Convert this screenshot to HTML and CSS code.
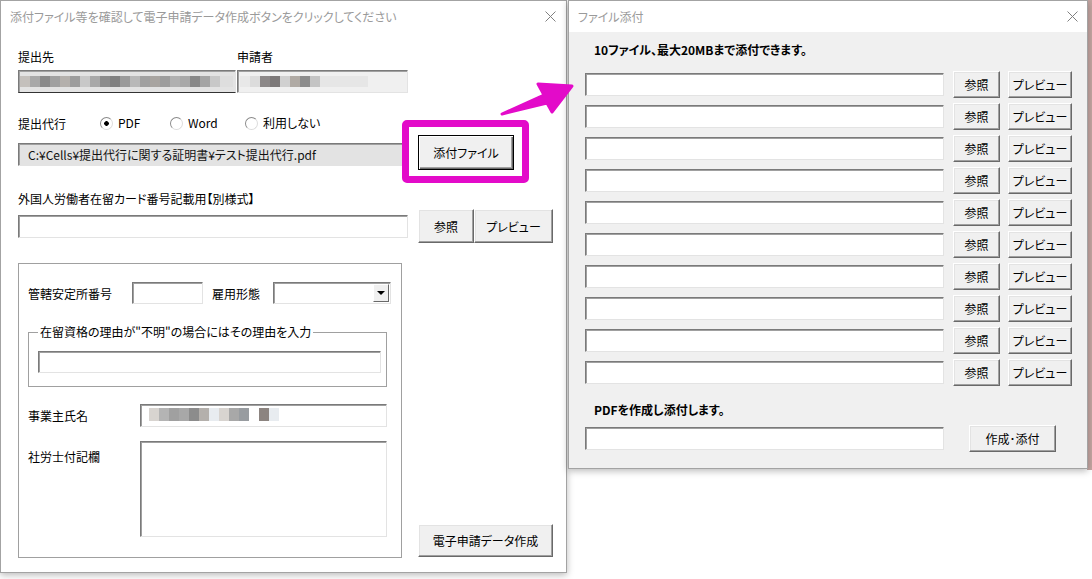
FILE: index.html
```html
<!DOCTYPE html>
<html lang="ja">
<head>
  <meta charset="UTF-8" />
  <title>電子申請データ作成</title>
  <link rel="stylesheet" href="styles.css">
</head>
<body>
  <!-- main dialog -->
  <div class="window main-window">
    <div class="titlebar">
      <span class="title">添付ファイル等を確認して電子申請データ作成ボタンをクリックしてください</span>
      <svg class="close" viewBox="0 0 11 11"><path d="M0.5 0.5L10.5 10.5M10.5 0.5L0.5 10.5"/></svg>
    </div>
    <div class="main-body">
      <div class="head-labels">
        <span class="label-dest">提出先</span>
        <span>申請者</span>
      </div>
      <div class="field-row">
        <div class="field readonly blur-dest"></div>
        <div class="field readonly blur-appl"></div>
      </div>
      <div class="radio-row">
        <span class="label-proxy">提出代行</span>
        <span class="radio checked pdf">PDF</span>
        <span class="radio word">Word</span>
        <span class="radio">利用しない</span>
      </div>
      <div class="path-row">
        <div class="field readonly path-field">C:¥Cells¥提出代行に関する証明書¥テスト提出代行.pdf</div>
        <button class="btn btn-default attach-btn">添付ファイル</button>
        <div class="highlight"></div>
      </div>
      <div class="section-label">外国人労働者在留カード番号記載用【別様式】</div>
      <div class="card-row">
        <div class="field card-field"></div>
        <button class="btn ref-btn">参照</button>
        <button class="btn preview-btn">プレビュー</button>
      </div>
      <div class="bottom-row">
        <div class="frame">
          <div class="frame-row">
            <span class="label-office">管轄安定所番号</span>
            <div class="field office-field"></div>
            <span class="label-type">雇用形態</span>
            <div class="field combo">
              <span class="combo-btn"></span>
            </div>
          </div>
          <fieldset class="reason">
            <legend>在留資格の理由が"不明"の場合にはその理由を入力</legend>
            <div class="field reason-field"></div>
          </fieldset>
          <div class="frame-row owner-row">
            <span class="label-wide">事業主氏名</span>
            <div class="field owner-field blur-owner"></div>
          </div>
          <div class="frame-row note-row">
            <span class="label-wide note-label">社労士付記欄</span>
            <div class="field note-field"></div>
          </div>
        </div>
        <button class="btn create-btn">電子申請データ作成</button>
      </div>
    </div>
  </div>

  <!-- attach dialog -->
  <div class="window attach-window">
    <div class="titlebar">
      <span class="title">ファイル添付</span>
      <svg class="close" viewBox="0 0 11 11"><path d="M0.5 0.5L10.5 10.5M10.5 0.5L0.5 10.5"/></svg>
    </div>
    <div class="attach-body">
      <div class="attach-head">10ファイル、最大20MBまで添付できます。</div>
      <div class="file-list">
        <div class="file-row"><div class="field file-field"></div><button class="btn small-ref">参照</button><button class="btn small-preview">プレビュー</button></div>
        <div class="file-row"><div class="field file-field"></div><button class="btn small-ref">参照</button><button class="btn small-preview">プレビュー</button></div>
        <div class="file-row"><div class="field file-field"></div><button class="btn small-ref">参照</button><button class="btn small-preview">プレビュー</button></div>
        <div class="file-row"><div class="field file-field"></div><button class="btn small-ref">参照</button><button class="btn small-preview">プレビュー</button></div>
        <div class="file-row"><div class="field file-field"></div><button class="btn small-ref">参照</button><button class="btn small-preview">プレビュー</button></div>
        <div class="file-row"><div class="field file-field"></div><button class="btn small-ref">参照</button><button class="btn small-preview">プレビュー</button></div>
        <div class="file-row"><div class="field file-field"></div><button class="btn small-ref">参照</button><button class="btn small-preview">プレビュー</button></div>
        <div class="file-row"><div class="field file-field"></div><button class="btn small-ref">参照</button><button class="btn small-preview">プレビュー</button></div>
        <div class="file-row"><div class="field file-field"></div><button class="btn small-ref">参照</button><button class="btn small-preview">プレビュー</button></div>
        <div class="file-row"><div class="field file-field"></div><button class="btn small-ref">参照</button><button class="btn small-preview">プレビュー</button></div>
      </div>
      <div class="attach-head pdf-head">PDFを作成し添付します。</div>
      <div class="file-row pdf-row">
        <div class="field file-field"></div>
        <button class="btn make-btn">作成･添付</button>
      </div>
    </div>
  </div>

  <!-- annotation arrow -->
  <svg class="arrow" viewBox="0 0 1092 579">
    <polygon points="502,114 544,95 538,84 572,86 552,112 547,103"/>
  </svg>
</body>
</html>
```

FILE: styles.css
```css
* {
  box-sizing: border-box;
  margin: 0;
  padding: 0;
}

body {
  position: relative;
  width: 1092px;
  height: 579px;
  overflow: hidden;
  font-family: "Noto Sans CJK JP", "Noto Sans", sans-serif;
  font-size: 12px;
  font-feature-settings: "palt";
  color: #000;
  background: linear-gradient(#c6a7a3, #c6a7a3) 1087px 0 / 5px 470px no-repeat, #fff;
}

.window {
  position: absolute;
  top: 0;
  border: 1px solid #a3a3a3;
  box-shadow: 0 2px 7px rgba(0, 0, 0, 0.28);
}

.main-window {
  left: 0;
  width: 567px;
  height: 573px;
  background: #fff;
}

.attach-window {
  left: 568px;
  width: 520px;
  height: 469px;
  background: #f0f0f0;
}

.titlebar {
  height: 31px;
  display: flex;
  align-items: center;
  justify-content: space-between;
  padding: 0 10px 0 9px;
  background: #fff;
}

.attach-window .titlebar {
  padding-right: 9px;
}

.title {
  color: #9a9a9a;
  line-height: 16px;
}

.close {
  width: 11px;
  height: 11px;
  fill: none;
  stroke: #808080;
  stroke-width: 1;
}

/* fields */
.field {
  height: 23px;
  background: #fff;
  border: 1px solid;
  border-color: #7a7a7a #e3e3e3 #e3e3e3 #7a7a7a;
  box-shadow: inset 1px 1px #a0a0a0;
}

.readonly {
  background-color: #e3e3e3;
}

.btn {
  font: inherit;
  font-feature-settings: "palt";
  color: #000;
  background: #f0f0f0;
  border: 1px solid;
  border-color: #fff #696969 #696969 #fff;
  box-shadow: inset -1px -1px #a0a0a0, inset 1px 1px #e3e3e3;
}

.btn-default {
  border: 1px solid #000;
  box-shadow: inset 1px 1px #fff, inset -1px -1px #696969, inset -2px -2px #a0a0a0;
}

/* main dialog body */
.main-body {
  padding-left: 17px;
}

.head-labels {
  display: flex;
  margin-top: 18px;
  line-height: 14px;
}

.label-dest {
  width: 219px;
}

.field-row {
  display: flex;
  margin-top: 6px;
}

.blur-dest {
  width: 218px;
  border-bottom-color: #333;
  background-image: linear-gradient(to right,
    #c4c0bc 0 10px, #a8a8a8 10px 20px, #8a8a8a 20px 30px, #a0a0a0 30px 40px,
    #b4b0ac 40px 50px, #9c9c9c 50px 60px, #c8c8c8 60px 70px, #a8a8a8 70px 80px,
    #8c8c8c 80px 90px, #808080 90px 100px, #9a9a9a 100px 110px, #b8b8b8 110px 120px,
    #a0a0a0 120px 130px, #a8a4a0 130px 140px, #9c9c9c 140px 150px, #b0b0b0 150px 160px,
    #a8a8a8 160px 170px, #888 170px 180px, #a4a4a4 180px 190px, #c8c8c8 190px 200px,
    #dedede 200px 213px);
  background-size: 213px 11px;
  background-position: 1px 5px;
  background-repeat: no-repeat;
}

.blur-appl {
  width: 171px;
  margin-left: 1px;
  background-color: #f0f0f0;
  background-image: linear-gradient(to right,
    #e8e8e8 0 10px, #dcdcdc 10px 20px, #8c8888 20px 30px, #7c7878 30px 40px,
    #d0d0d0 40px 50px, #b0aaa4 50px 60px, #8c8c8c 60px 70px, #c4c4c4 70px 80px,
    #e6e6e6 80px 128px);
  background-size: 128px 11px;
  background-position: 2px 5px;
  background-repeat: no-repeat;
}

.radio-row {
  display: flex;
  align-items: center;
  margin-top: 22px;
  height: 16px;
}

.label-proxy {
  width: 82px;
}

.radio {
  display: inline-flex;
  align-items: center;
  line-height: 16px;
}

.radio::before {
  content: "";
  width: 11px;
  height: 11px;
  margin-right: 5px;
  border-radius: 50%;
  border: 1px solid;
  border-color: #8a8a8a #dcdcdc #dcdcdc #8a8a8a;
  background: #fff;
}

.radio.checked::before {
  background: radial-gradient(circle, #000 0 2px, #fff 2.6px);
}

.pdf {
  width: 70px;
}

.word {
  width: 75px;
}

.path-row {
  position: relative;
  display: flex;
  margin-top: 4px;
  height: 35px;
}

.path-field {
  width: 390px;
  margin-top: 8px;
  padding-left: 9px;
  line-height: 21px;
  color: #111;
}

.attach-btn {
  width: 96px;
  height: 35px;
  margin-left: 10px;
}

.highlight {
  position: absolute;
  left: 384px;
  top: -15px;
  width: 127px;
  height: 63px;
  border: 7px solid #e30bc9;
  border-radius: 5px;
}

.section-label {
  margin-top: 22px;
  line-height: 14px;
}

.card-row {
  display: flex;
  align-items: center;
  margin-top: 3px;
  height: 34px;
}

.card-field {
  width: 390px;
}

.ref-btn {
  width: 56px;
  height: 34px;
  margin-left: 10px;
}

.preview-btn {
  width: 79px;
  height: 34px;
}

.bottom-row {
  display: flex;
  margin-top: 20px;
}

.frame {
  width: 384px;
  height: 295px;
  border: 1px solid #a0a0a0;
  padding: 18px 0 0 9px;
}

.frame-row {
  display: flex;
  align-items: center;
}

.label-office {
  width: 104px;
}

.office-field {
  width: 71px;
  height: 22px;
}

.label-type {
  width: 61px;
  margin-left: 9px;
}

.combo {
  display: flex;
  justify-content: flex-end;
  width: 118px;
  height: 22px;
  padding: 1px;
}

.combo-btn {
  position: relative;
  width: 16px;
  height: 18px;
  background: #f0f0f0;
  border: 1px solid;
  border-color: #fff #696969 #696969 #fff;
}

.combo-btn::after {
  content: "";
  position: absolute;
  left: 3px;
  top: 6px;
  border-left: 4px solid transparent;
  border-right: 4px solid transparent;
  border-top: 4px solid #000;
}

.reason {
  width: 359px;
  margin-top: 20px;
  border: 1px solid #a0a0a0;
  padding: 0 5px 13px 9px;
}

.reason legend {
  padding: 0 2px;
  line-height: 16px;
}

.reason-field {
  margin-top: 11px;
  width: 343px;
  height: 22px;
}

.owner-row {
  margin-top: 17px;
}

.label-wide {
  width: 112px;
}

.owner-field {
  width: 247px;
  background-image: linear-gradient(to right,
    #d8d4d0 0 10px, #b4b4b4 10px 20px, #a0a0a0 20px 30px, #a8a8a8 30px 40px,
    #8c8c8c 40px 50px, #b4b0ac 50px 60px, #e8ecf0 60px 70px, #d8d4d0 70px 80px,
    #a8a8a8 80px 90px, #989ca0 90px 100px, #fff 100px 110px, #8c8480 110px 120px,
    #e8ecf0 120px 130px);
  background-size: 130px 13px;
  background-position: 8px 3px;
  background-repeat: no-repeat;
}

.note-row {
  align-items: flex-start;
  margin-top: 14px;
}

.note-label {
  margin-top: 8px;
  line-height: 16px;
}

.note-field {
  width: 247px;
  height: 96px;
}

.create-btn {
  align-self: flex-end;
  width: 135px;
  height: 33px;
  margin: 0 0 1px 16px;
}

/* attach dialog body */
.attach-body {
  padding-left: 16px;
}

.attach-head {
  margin-top: 10px;
  padding-left: 9px;
  font-weight: bold;
  line-height: 16px;
}

.file-list {
  margin-top: 10px;
}

.file-row {
  display: flex;
  align-items: center;
  height: 32px;
}

.file-field {
  width: 359px;
}

.small-ref {
  width: 47px;
  height: 27px;
  margin-left: 9px;
}

.small-preview {
  width: 64px;
  height: 27px;
  margin-left: 8px;
}

.pdf-head {
  margin-top: 14px;
}

.pdf-row {
  margin-top: 3px;
  height: 34px;
}

.make-btn {
  width: 87px;
  height: 27px;
  margin-left: 25px;
}

.arrow {
  position: absolute;
  left: 0;
  top: 0;
  width: 1092px;
  height: 579px;
  pointer-events: none;
}

.arrow polygon {
  fill: #e30bc9;
  stroke: #e30bc9;
  stroke-width: 3;
  stroke-linejoin: round;
}
```
